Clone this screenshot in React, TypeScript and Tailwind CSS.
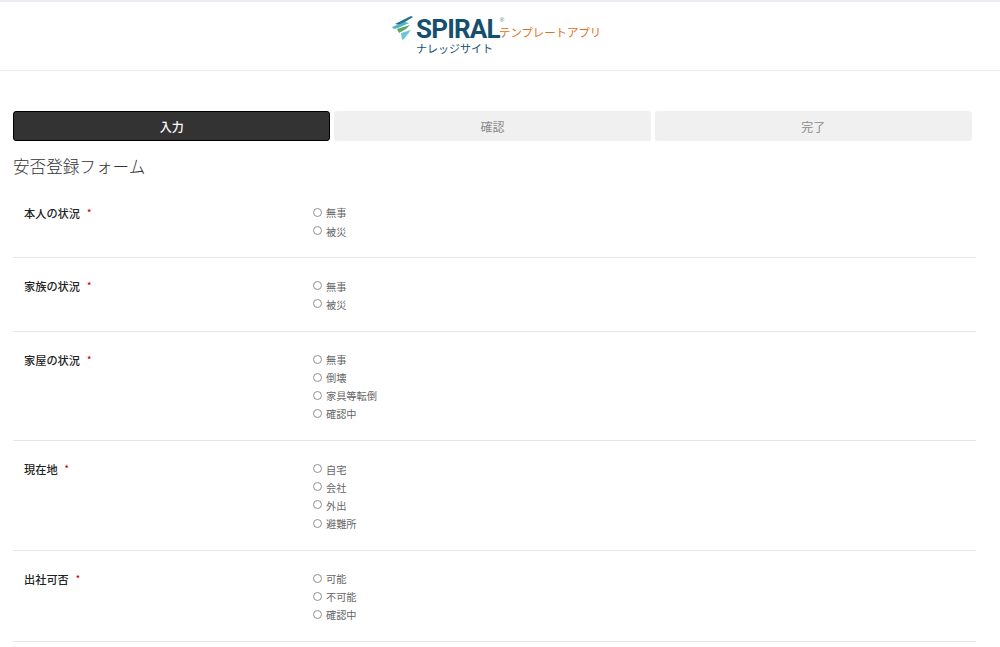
const rows = [
  { label: "本人の状況", options: ["無事", "被災"] },
  { label: "家族の状況", options: ["無事", "被災"] },
  { label: "家屋の状況", options: ["無事", "倒壊", "家具等転倒", "確認中"] },
  { label: "現在地", options: ["自宅", "会社", "外出", "避難所"] },
  { label: "出社可否", options: ["可能", "不可能", "確認中"] },
];

function Logo() {
  return (
    <div className="flex items-start h-[44px] w-[218px]">
      <svg width="24" height="27" viewBox="0 0 24 27" className="shrink-0 mt-[1px]">
        <path d="M4 9 L20 1 L22 2 L9 10 Z" fill="#1f6f8f" />
        <path d="M1 12 L14 7 L18 8 L7 13 L3 14 Z" fill="#4fb3c8" />
        <path d="M6 14 L19 10 L15 14 L8 18 Z" fill="#5aa95c" />
        <path d="M10 18 L20 15 L13 24 L11 25 Z" fill="#6fc3dc" />
      </svg>
      <div className="flex flex-col items-start w-[84px] ml-[1px]">
        <div className="flex items-start h-[26px] pt-[2px]">
          <span className="font-['Roboto',sans-serif] font-bold text-[26px] leading-[26px] tracking-[-0.8px] text-[#14506e]">SPIRAL</span>
          <span className="text-[6px] leading-[8px] text-[#4a7a90] font-['Liberation_Sans',sans-serif]">®</span>
        </div>
        <span className="text-[11px] leading-[14px] mt-[1px] whitespace-nowrap text-[#14506e] font-['Noto_Sans_CJK_JP',sans-serif]">ナレッジサイト</span>
      </div>
      <span className="ml-[-1px] mt-[9px] text-[11.4px] leading-[18px] text-[#dd6f20] font-['Noto_Sans_CJK_JP',sans-serif] whitespace-nowrap">テンプレートアプリ</span>
    </div>
  );
}

function Step({ label, active }: { label: string; active?: boolean }) {
  return active ? (
    <div className="h-[30px] pt-[1px] flex items-center justify-center rounded-[3px] border border-black bg-[#333333] text-white text-[12px] font-medium">{label}</div>
  ) : (
    <div className="h-[30px] pt-[1px] flex items-center justify-center rounded-[3px] bg-[#f0f0f0] text-[#8a8a8a] text-[12px]">{label}</div>
  );
}

function Row({ label, options }: { label: string; options: string[] }) {
  return (
    <div className="flex border-b border-[#e6e6e6] pl-[11px] pt-[19px] pb-[17px]">
      <div className="w-[289px] shrink-0 flex items-start text-[11.2px] leading-[18px] font-medium text-[#222222]">
        <span>{label}</span>
        <span className="ml-[7px] text-[#cc0000] text-[9px]">*</span>
      </div>
      <div className="flex flex-col">
        {options.map((o) => (
          <div key={o} className="flex items-center h-[18.15px] text-[10.2px] text-[#666666]">
            <span className="w-[9px] h-[9px] rounded-full border border-[#8f8f8f] bg-white mr-[4px] -mt-[1px]" />
            <span>{o}</span>
          </div>
        ))}
      </div>
    </div>
  );
}

export default function App() {
  return (
    <div className="w-[1000px] h-[647px] overflow-hidden bg-white font-['Noto_Sans_CJK_JP',sans-serif]">
      <header className="h-[71px] border-t-2 border-t-[#ebebf7] border-b border-b-[#ececec] flex justify-center pt-[12px]">
        <Logo />
      </header>
      <main className="w-[963px] ml-[13px] pt-[40px]">
        <div className="grid grid-cols-3 gap-[3.5px] w-[959px]">
          <Step label="入力" active />
          <Step label="確認" />
          <Step label="完了" />
        </div>
        <h1 className="mt-[12px] text-[16.6px] leading-[26px] font-light text-[#333333]">安否登録フォーム</h1>
        <div className="mt-[6px]">
          {rows.map((r) => (
            <Row key={r.label} {...r} />
          ))}
        </div>
      </main>
    </div>
  );
}
